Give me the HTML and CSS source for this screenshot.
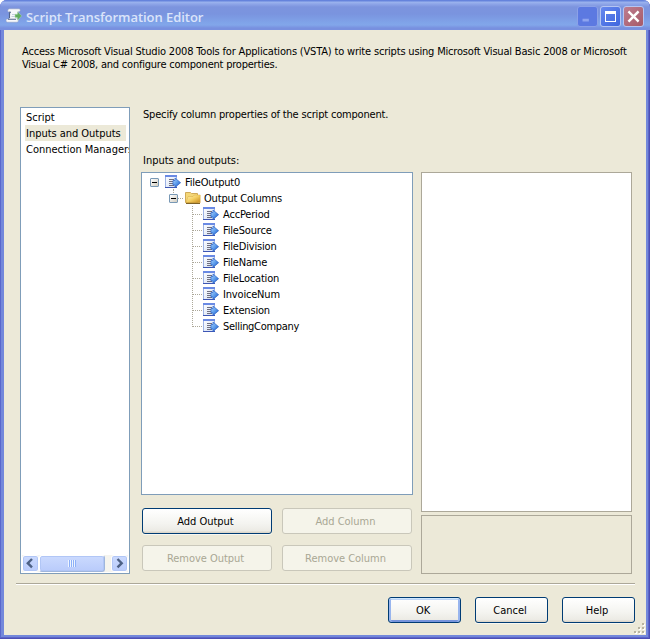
FILE: index.html
```html
<!DOCTYPE html>
<html lang="en">
<head>
<meta charset="utf-8">
<title>Script Transformation Editor</title>
<link rel="stylesheet" href="styles.css">
</head>
<body>
<svg class="defs" width="0" height="0">
  <defs>
    <linearGradient id="arrow" x1="0" y1="0" x2="1" y2="1"><stop offset="0" stop-color="#b5dafc"/><stop offset=".5" stop-color="#5c9cec"/><stop offset="1" stop-color="#1c50b8"/></linearGradient>
    <linearGradient id="sheet" x1="0" y1="0" x2="1" y2="1"><stop offset="0" stop-color="#ffffff"/><stop offset="1" stop-color="#cfdcf4"/></linearGradient>
    <linearGradient id="gold" x1="0" y1="0" x2="1" y2="1"><stop offset="0" stop-color="#fff6c0"/><stop offset=".5" stop-color="#f4cf62"/><stop offset="1" stop-color="#c88a1c"/></linearGradient>
    <symbol id="column" viewBox="0 0 16 16">
      <path d="M.5 1.5h11v12H.5z" fill="url(#sheet)" stroke="#9cb2e4"/>
      <path d="M0 1h12v2H0z" fill="#6a8ae4"/><path d="M0 13h12v1H0z" fill="#3d56b4"/>
      <path d="M4 5.5h5M4 7.5h4M4 9.5h4M4 11.5h5" stroke="#707080"/>
      <path d="M8 6.5h2V4l5.6 4.7L10 13.4V11H8z" fill="url(#arrow)" stroke="#2a62c8" stroke-width=".7"/>
    </symbol>
    <symbol id="folder" viewBox="0 0 16 16">
      <path d="M.5 12.5v-10h5l1 1h6v9z" fill="#f4d778" stroke="#d0aa58"/>
      <path d="M1 12.7 3 6.5h5L9.3 5h5.9v7.7z" fill="url(#gold)" stroke="#d8aa40" stroke-width=".5"/>
      <path d="M1 13.4h14" fill="none" stroke="#705010"/>
    </symbol>
  </defs>
</svg>
<div class="window">
  <header class="titlebar">
    <svg class="app-icon" width="16" height="16" viewBox="0 0 16 16">
      <path d="M3.5.8h9.7c1.4 0 1.4 3 0 3h-1L11 11h1c1 0 .6 3.2-1 3.2H1.3C-.3 14.2-.3 11 1 11h2L4 4H2.5C1.2 4 1.5.8 3.5.8z" fill="#f7f8fb" stroke="#8797b8" stroke-width=".5"/>
      <path d="M3 4.3h2M2 11.3h8M3.5 5v5" stroke="#53658a" stroke-width="1.1"/><path d="M6 6.5h4M5.5 8.5h4" stroke="#c5cede"/>
      <path d="M9 6.2h2.5V3.7l4.1 4.2-4.1 4.4V9.6H9z" fill="#60ac5c" stroke="#b5d8b5" stroke-width=".5"/>
    </svg>
    <h1>Script Transformation Editor</h1>
    <div class="controls">
      <svg class="ctl min" width="21" height="21" viewBox="0 0 21 21"><path d="M5 13h7v3H5z" fill="#8ea4ef"/></svg>
      <svg class="ctl max" width="21" height="21" viewBox="1 1 19 19"><path d="M5 5h11v11H5zM6 8v7h9V8z" fill="#fff" fill-rule="evenodd"/></svg>
      <svg class="ctl close" width="21" height="21" viewBox="1 1 19 19"><path d="m6.3 6.3 8.4 8.4m0-8.4-8.4 8.4" stroke="#fff" stroke-width="2.4" stroke-linecap="square"/></svg>
    </div>
  </header>
  <main>
    <p class="intro"><span class="i1">Access Microsoft Visual Studio 2008 Tools for Applications (VSTA) to write scripts using Microsoft Visual Basic 2008 or Microsoft</span><br><span class="i2">Visual C# 2008, and configure component properties.</span></p>
    <div class="body">
      <nav class="pages">
        <ul>
          <li>Script</li>
          <li class="selected">Inputs and Outputs</li>
          <li class="managers">Connection Managers</li>
        </ul>
        <div class="scrollbar">
          <svg class="sb" width="17" height="17" viewBox="1 1 15 15"><path d="m10 4-4.2 4.2L10 12.4" fill="none" stroke="#4d6185" stroke-width="2.4"/></svg>
          <div class="thumb"><i></i></div>
          <svg class="sb" width="17" height="17" viewBox="1 1 15 15"><path d="m6.5 4 4.2 4.2-4.2 4.2" fill="none" stroke="#4d6185" stroke-width="2.4"/></svg>
        </div>
      </nav>
      <section class="editor">
        <p class="specify">Specify column properties of the script component.</p>
        <p class="label">Inputs and outputs:</p>
        <div class="panes">
          <div class="left">
            <div class="tree">
              <div class="row root"><b class="toggle"></b><svg width="16" height="16"><use href="#column"/></svg><span>FileOutput0</span></div>
              <div class="row group"><b class="toggle"></b><i class="dots"></i><svg width="16" height="16"><use href="#folder"/></svg><span>Output Columns</span></div>
              <div class="row leaf"><i class="dots"></i><svg width="16" height="16"><use href="#column"/></svg><span>AccPeriod</span></div>
              <div class="row leaf"><i class="dots"></i><svg width="16" height="16"><use href="#column"/></svg><span>FileSource</span></div>
              <div class="row leaf"><i class="dots"></i><svg width="16" height="16"><use href="#column"/></svg><span>FileDivision</span></div>
              <div class="row leaf"><i class="dots"></i><svg width="16" height="16"><use href="#column"/></svg><span>FileName</span></div>
              <div class="row leaf"><i class="dots"></i><svg width="16" height="16"><use href="#column"/></svg><span>FileLocation</span></div>
              <div class="row leaf"><i class="dots"></i><svg width="16" height="16"><use href="#column"/></svg><span>InvoiceNum</span></div>
              <div class="row leaf"><i class="dots"></i><svg width="16" height="16"><use href="#column"/></svg><span>Extension</span></div>
              <div class="row leaf last"><i class="dots"></i><svg width="16" height="16"><use href="#column"/></svg><span>SellingCompany</span></div>
            </div>
            <div class="actions">
              <button>Add Output</button><button disabled>Add Column</button>
              <button disabled>Remove Output</button><button disabled>Remove Column</button>
            </div>
          </div>
          <div class="right">
            <div class="grid"></div>
            <div class="hint"></div>
          </div>
        </div>
      </section>
    </div>
    <footer>
      <button class="default">OK</button><button>Cancel</button><button>Help</button>
    </footer>
    <svg class="grip" width="12" height="12" viewBox="0 0 12 12">
      <path d="M9 1h2v2H9zM5 5h2v2H5zM9 5h2v2H9zM1 9h2v2H1zM5 9h2v2H5zM9 9h2v2H9z" fill="#fff"/>
      <path d="M8 0h2v2H8zM4 4h2v2H4zM8 4h2v2H8zM0 8h2v2H0zM4 8h2v2H4zM8 8h2v2H8z" fill="#b8b4a0"/>
    </svg>
  </main>
</div>
</body>
</html>
```
FILE: styles.css
```css
* { box-sizing: border-box; }
body { margin: 0; background: #fff; overflow: hidden; font: 11px/13px "DejaVu Sans Condensed", "DejaVu Sans", Tahoma, sans-serif; font-stretch: condensed; letter-spacing: -0.18px; color: #000; }
p, h1, ul { margin: 0; padding: 0; }
svg { display: block; flex: none; }
.defs { position: absolute; }
.window { width: 650px; height: 639px; padding: 0 4px 4px; border-radius: 7px 7px 0 0; background: #7388db; box-shadow: inset -1px -1px #4c4fb5, inset 1px 0 #5a68cc, inset -2px -2px #5c65c8; }
.titlebar { display: flex; align-items: center; height: 30px; margin: 0 -4px; padding: 3px 6px 0; border-radius: 7px 7px 0 0; background: linear-gradient(#6583dc 0, #6583dc 1px, #9cb4ee 2px, #8ea5e8 4px, #7c94de 7px, #7a94df 14px, #80a4e9 23px, #82a6ea 25px, #7890df 28px, #7890df); }
.app-icon { margin-top: -1px; }
h1 { margin: 0 0 0 4px; font: 600 13px/18px "Open Sans", sans-serif; letter-spacing: -0.05px; color: #dbe4fa; white-space: nowrap; }
.controls { display: flex; gap: 2px; margin-left: auto; }
.ctl { border: 1px solid #b5c5f2; border-radius: 3px; }
.min { background: #5c79e1; border-color: #8ca1e8; }
.max { background: linear-gradient(135deg, #6688ee, #3f66de); }
.close { background: linear-gradient(135deg, #bd7d90, #a75a68); }
main { position: relative; height: 605px; background: #ece9d8; }
.intro { height: 77px; padding: 15px 0 0 18px; white-space: nowrap; }
.i2 { letter-spacing: -0.22px; }
.body { display: flex; height: 467px; padding: 0 14px 0 16px; }
.pages { display: flex; flex-direction: column; justify-content: space-between; width: 110px; padding: 1px; border: 1px solid #7f9db9; background: #fff; overflow: hidden; }
ul { list-style: none; padding: 0 3px 0 3px; letter-spacing: -0.03px; overflow: hidden; margin-right: -1px; }
li { height: 16px; padding-left: 1px; line-height: 18px; white-space: nowrap; }
.selected { background: #ece9d8; }
.scrollbar { display: flex; height: 17px; background: #f5f4ee; }
.sb, .thumb { border: 1px solid #fff; border-radius: 3px; background: linear-gradient(#cbdafe, #b9cbfb); box-shadow: inset 0 0 0 1px #b1c6f6; }
.thumb { display: flex; align-items: center; justify-content: center; width: 67px; margin: 0 6px 0 0; border-right-color: #9fb6dc; border-bottom-color: #9fb6dc; }
.thumb i { width: 8px; height: 7px; background: repeating-linear-gradient(90deg, #eef4fe 0 1px, #8cb0f8 1px 2px); }
.editor { flex: 1; padding-left: 11px; }
.specify { height: 46px; padding: 1px 0 0 2px; }
.label { height: 19px; padding: 1px 0 0 2px; letter-spacing: -0.03px; }
.panes { display: flex; gap: 8px; }
.left { width: 272px; }
.tree { height: 323px; padding: 1px 0 0 8px; border: 1px solid #7f9db9; background: #fff; }
.row { display: flex; align-items: center; height: 16px; position: relative; white-space: nowrap; }
.row span { margin-left: 4px; }
.toggle { width: 9px; height: 9px; border: 1px solid #7898b5; border-radius: 1px; background: linear-gradient(#000, #000) center / 5px 1px no-repeat, linear-gradient(135deg, #fff, #d2cdc0); }
.root svg { margin-left: 6px; }
.group { padding-left: 19px; }
.group::before { content: ""; position: absolute; left: 23px; top: -1px; height: 4px; border-left: 1px dotted #aca899; }
.group .dots { width: 6px; }
.group svg { margin-left: 1px; }
.group span { margin-left: 3px; }
.dots { width: 10px; height: 1px; background: repeating-linear-gradient(90deg, #aca899 0 1px, transparent 1px 2px); }
.leaf { padding-left: 43px; }
.leaf::before { content: ""; position: absolute; left: 42px; top: 0; height: 16px; width: 1px; background: repeating-linear-gradient(#aca899 0 1px, transparent 1px 2px); }
.last::before { height: 9px; }
.last span { letter-spacing: -0.3px; }
.actions { display: grid; grid-template-columns: 130px 130px; gap: 11px 10px; padding: 13px 0 0 1px; }
button { height: 26px; padding: 0 3px 0 0; border: 1px solid #003c74; border-radius: 3px; background: linear-gradient(#fff, #f4f4f0 60%, #ecebe5 90%, #d8d2c5); font: inherit; letter-spacing: -0.03px; color: #000; box-shadow: 0 1px #f8f7f0; }
button:disabled { border-color: #c9c7ba; background: #f5f4ea; color: #a9a794; box-shadow: none; }
.right { width: 211px; }
.grid { height: 340px; border: 1px solid #aca899; background: #fff; }
.hint { height: 59px; margin-top: 3px; border: 1px solid #aca899; }
footer { display: flex; justify-content: flex-end; gap: 14px; margin: 9px 11px 0 12px; padding-top: 13px; border-top: 1px solid #aca899; box-shadow: inset 0 1px #fff; }
footer button { width: 73px; height: 26px; }
.default { box-shadow: inset 0 1px #cee7ff, inset 2px 0 #98b5ee, inset -2px 0 #98b5ee, inset 0 -2px #7694dc, inset 0 2px #bcd4f6; }
.grip { position: absolute; right: 0; bottom: 0; }
```
